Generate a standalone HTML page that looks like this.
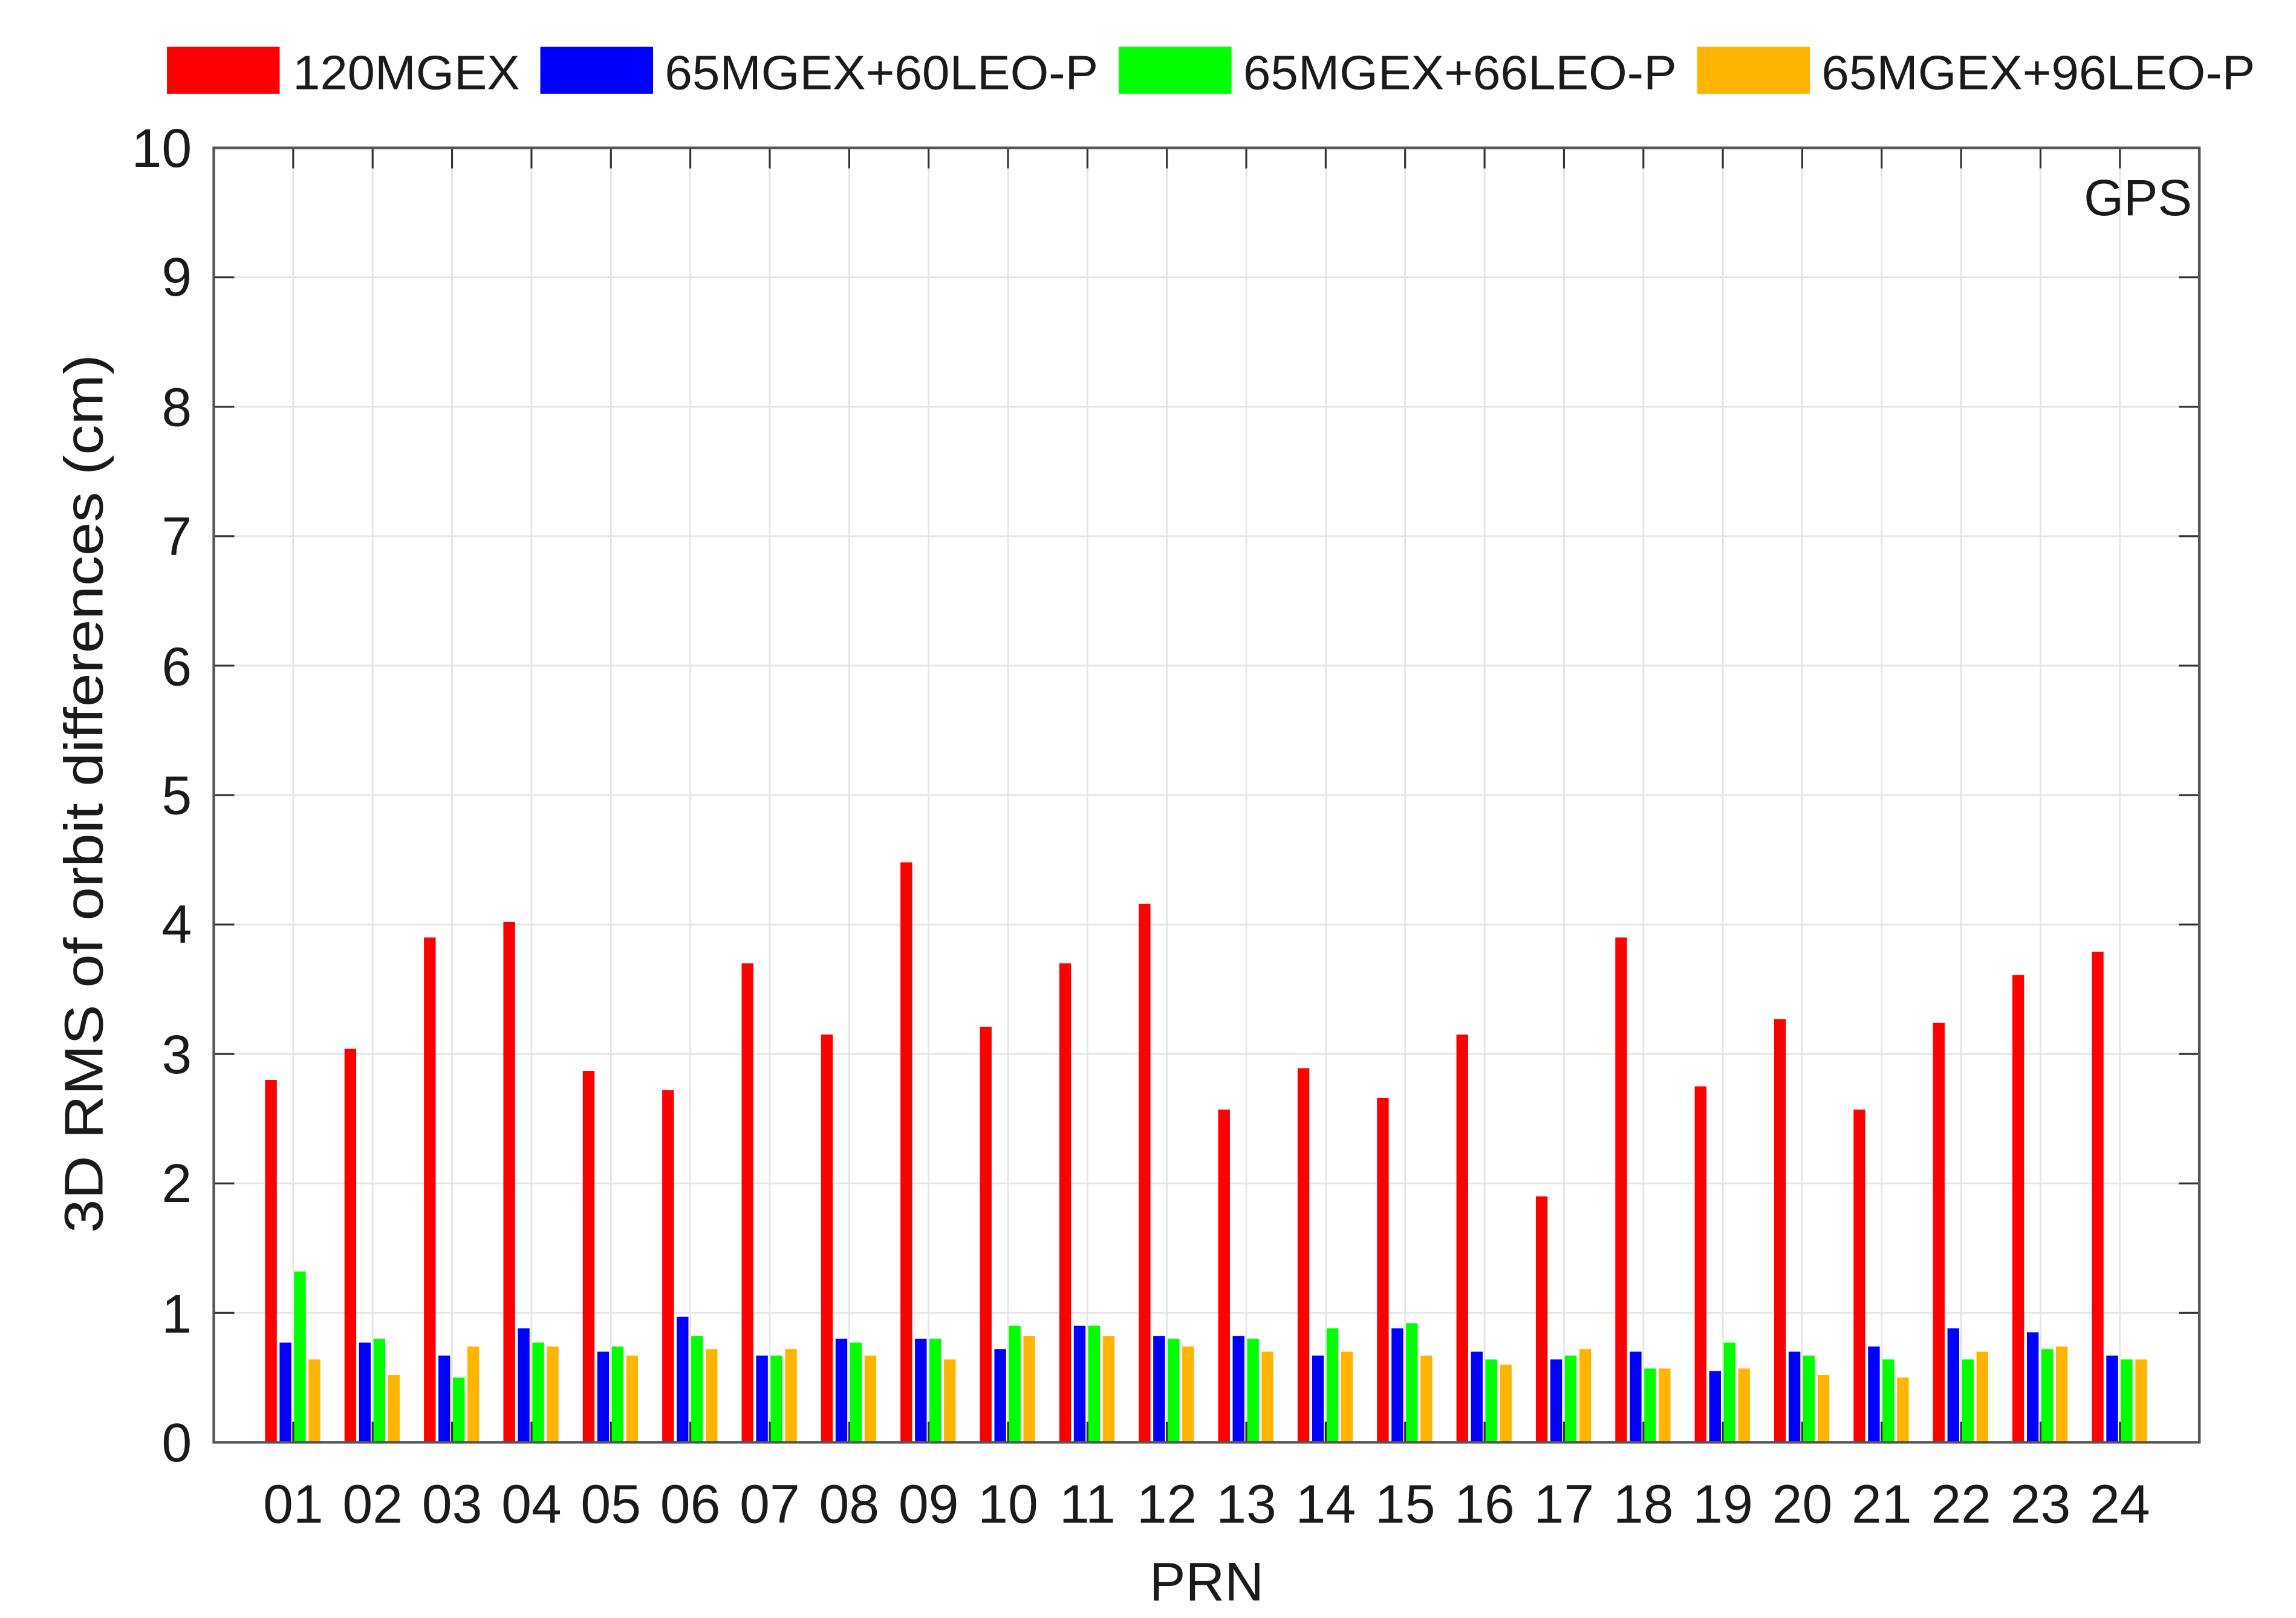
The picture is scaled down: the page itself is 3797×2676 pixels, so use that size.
<!DOCTYPE html>
<html><head><meta charset="utf-8"><style>
html,body{margin:0;padding:0;background:#fff}
svg{display:block}
text{font-family:"Liberation Sans",Arial,sans-serif;fill:#1a1a1a}
.r{fill:#ff0000}.b{fill:#0000ff}.g{fill:#00ff00}.o{fill:#ffb400}
</style></head><body>
<svg width="3797" height="2676" viewBox="0 0 1568 1105" preserveAspectRatio="none" xmlns="http://www.w3.org/2000/svg">
<rect width="1568" height="1105" fill="#fff"/>
<rect x="114" y="32" width="77" height="32" class="r"/>
<text x="200" y="61" font-size="33" textLength="155" lengthAdjust="spacingAndGlyphs">120MGEX</text>
<rect x="369" y="32" width="77" height="32" class="b"/>
<text x="454" y="61" font-size="33" textLength="296" lengthAdjust="spacingAndGlyphs">65MGEX+60LEO-P</text>
<rect x="764" y="32" width="77" height="32" class="g"/>
<text x="849" y="61" font-size="33" textLength="296" lengthAdjust="spacingAndGlyphs">65MGEX+66LEO-P</text>
<rect x="1159" y="32" width="77" height="32" class="o"/>
<text x="1244" y="61" font-size="33" textLength="296" lengthAdjust="spacingAndGlyphs">65MGEX+96LEO-P</text>
<g stroke="#e6e6e6" stroke-width="1.2">
<line x1="146" x2="1502" y1="896.6" y2="896.6"/><line x1="146" x2="1502" y1="808.2" y2="808.2"/>
<line x1="146" x2="1502" y1="719.8" y2="719.8"/><line x1="146" x2="1502" y1="631.4" y2="631.4"/>
<line x1="146" x2="1502" y1="543" y2="543"/><line x1="146" x2="1502" y1="454.6" y2="454.6"/>
<line x1="146" x2="1502" y1="366.2" y2="366.2"/><line x1="146" x2="1502" y1="277.8" y2="277.8"/>
<line x1="146" x2="1502" y1="189.4" y2="189.4"/>
</g>
<g stroke="#e6e6e6" stroke-width="1.2">
<line x1="200.24" x2="200.24" y1="101" y2="985"/><line x1="254.48" x2="254.48" y1="101" y2="985"/>
<line x1="308.72" x2="308.72" y1="101" y2="985"/><line x1="362.96" x2="362.96" y1="101" y2="985"/>
<line x1="417.2" x2="417.2" y1="101" y2="985"/><line x1="471.44" x2="471.44" y1="101" y2="985"/>
<line x1="525.68" x2="525.68" y1="101" y2="985"/><line x1="579.92" x2="579.92" y1="101" y2="985"/>
<line x1="634.16" x2="634.16" y1="101" y2="985"/><line x1="688.4" x2="688.4" y1="101" y2="985"/>
<line x1="742.64" x2="742.64" y1="101" y2="985"/><line x1="796.88" x2="796.88" y1="101" y2="985"/>
<line x1="851.12" x2="851.12" y1="101" y2="985"/><line x1="905.36" x2="905.36" y1="101" y2="985"/>
<line x1="959.6" x2="959.6" y1="101" y2="985"/><line x1="1013.84" x2="1013.84" y1="101" y2="985"/>
<line x1="1068.08" x2="1068.08" y1="101" y2="985"/><line x1="1122.32" x2="1122.32" y1="101" y2="985"/>
<line x1="1176.56" x2="1176.56" y1="101" y2="985"/><line x1="1230.8" x2="1230.8" y1="101" y2="985"/>
<line x1="1285.04" x2="1285.04" y1="101" y2="985"/><line x1="1339.28" x2="1339.28" y1="101" y2="985"/>
<line x1="1393.52" x2="1393.52" y1="101" y2="985"/><line x1="1447.76" x2="1447.76" y1="101" y2="985"/>
</g>
<g transform="translate(200.24,985) scale(1,-88.4)"><rect x="-19.2" width="8" height="2.80" class="r"/><rect x="-9.3" width="8" height="0.77" class="b"/><rect x="0.6" width="8" height="1.32" class="g"/><rect x="10.5" width="8" height="0.64" class="o"/></g>
<g transform="translate(254.48,985) scale(1,-88.4)"><rect x="-19.2" width="8" height="3.04" class="r"/><rect x="-9.3" width="8" height="0.77" class="b"/><rect x="0.6" width="8" height="0.80" class="g"/><rect x="10.5" width="8" height="0.52" class="o"/></g>
<g transform="translate(308.72,985) scale(1,-88.4)"><rect x="-19.2" width="8" height="3.90" class="r"/><rect x="-9.3" width="8" height="0.67" class="b"/><rect x="0.6" width="8" height="0.50" class="g"/><rect x="10.5" width="8" height="0.74" class="o"/></g>
<g transform="translate(362.96,985) scale(1,-88.4)"><rect x="-19.2" width="8" height="4.02" class="r"/><rect x="-9.3" width="8" height="0.88" class="b"/><rect x="0.6" width="8" height="0.77" class="g"/><rect x="10.5" width="8" height="0.74" class="o"/></g>
<g transform="translate(417.2,985) scale(1,-88.4)"><rect x="-19.2" width="8" height="2.87" class="r"/><rect x="-9.3" width="8" height="0.70" class="b"/><rect x="0.6" width="8" height="0.74" class="g"/><rect x="10.5" width="8" height="0.67" class="o"/></g>
<g transform="translate(471.44,985) scale(1,-88.4)"><rect x="-19.2" width="8" height="2.72" class="r"/><rect x="-9.3" width="8" height="0.97" class="b"/><rect x="0.6" width="8" height="0.82" class="g"/><rect x="10.5" width="8" height="0.72" class="o"/></g>
<g transform="translate(525.68,985) scale(1,-88.4)"><rect x="-19.2" width="8" height="3.70" class="r"/><rect x="-9.3" width="8" height="0.67" class="b"/><rect x="0.6" width="8" height="0.67" class="g"/><rect x="10.5" width="8" height="0.72" class="o"/></g>
<g transform="translate(579.92,985) scale(1,-88.4)"><rect x="-19.2" width="8" height="3.15" class="r"/><rect x="-9.3" width="8" height="0.80" class="b"/><rect x="0.6" width="8" height="0.77" class="g"/><rect x="10.5" width="8" height="0.67" class="o"/></g>
<g transform="translate(634.16,985) scale(1,-88.4)"><rect x="-19.2" width="8" height="4.48" class="r"/><rect x="-9.3" width="8" height="0.80" class="b"/><rect x="0.6" width="8" height="0.80" class="g"/><rect x="10.5" width="8" height="0.64" class="o"/></g>
<g transform="translate(688.4,985) scale(1,-88.4)"><rect x="-19.2" width="8" height="3.21" class="r"/><rect x="-9.3" width="8" height="0.72" class="b"/><rect x="0.6" width="8" height="0.90" class="g"/><rect x="10.5" width="8" height="0.82" class="o"/></g>
<g transform="translate(742.64,985) scale(1,-88.4)"><rect x="-19.2" width="8" height="3.70" class="r"/><rect x="-9.3" width="8" height="0.90" class="b"/><rect x="0.6" width="8" height="0.90" class="g"/><rect x="10.5" width="8" height="0.82" class="o"/></g>
<g transform="translate(796.88,985) scale(1,-88.4)"><rect x="-19.2" width="8" height="4.16" class="r"/><rect x="-9.3" width="8" height="0.82" class="b"/><rect x="0.6" width="8" height="0.80" class="g"/><rect x="10.5" width="8" height="0.74" class="o"/></g>
<g transform="translate(851.12,985) scale(1,-88.4)"><rect x="-19.2" width="8" height="2.57" class="r"/><rect x="-9.3" width="8" height="0.82" class="b"/><rect x="0.6" width="8" height="0.80" class="g"/><rect x="10.5" width="8" height="0.70" class="o"/></g>
<g transform="translate(905.36,985) scale(1,-88.4)"><rect x="-19.2" width="8" height="2.89" class="r"/><rect x="-9.3" width="8" height="0.67" class="b"/><rect x="0.6" width="8" height="0.88" class="g"/><rect x="10.5" width="8" height="0.70" class="o"/></g>
<g transform="translate(959.6,985) scale(1,-88.4)"><rect x="-19.2" width="8" height="2.66" class="r"/><rect x="-9.3" width="8" height="0.88" class="b"/><rect x="0.6" width="8" height="0.92" class="g"/><rect x="10.5" width="8" height="0.67" class="o"/></g>
<g transform="translate(1013.84,985) scale(1,-88.4)"><rect x="-19.2" width="8" height="3.15" class="r"/><rect x="-9.3" width="8" height="0.70" class="b"/><rect x="0.6" width="8" height="0.64" class="g"/><rect x="10.5" width="8" height="0.60" class="o"/></g>
<g transform="translate(1068.08,985) scale(1,-88.4)"><rect x="-19.2" width="8" height="1.90" class="r"/><rect x="-9.3" width="8" height="0.64" class="b"/><rect x="0.6" width="8" height="0.67" class="g"/><rect x="10.5" width="8" height="0.72" class="o"/></g>
<g transform="translate(1122.32,985) scale(1,-88.4)"><rect x="-19.2" width="8" height="3.90" class="r"/><rect x="-9.3" width="8" height="0.70" class="b"/><rect x="0.6" width="8" height="0.57" class="g"/><rect x="10.5" width="8" height="0.57" class="o"/></g>
<g transform="translate(1176.56,985) scale(1,-88.4)"><rect x="-19.2" width="8" height="2.75" class="r"/><rect x="-9.3" width="8" height="0.55" class="b"/><rect x="0.6" width="8" height="0.77" class="g"/><rect x="10.5" width="8" height="0.57" class="o"/></g>
<g transform="translate(1230.8,985) scale(1,-88.4)"><rect x="-19.2" width="8" height="3.27" class="r"/><rect x="-9.3" width="8" height="0.70" class="b"/><rect x="0.6" width="8" height="0.67" class="g"/><rect x="10.5" width="8" height="0.52" class="o"/></g>
<g transform="translate(1285.04,985) scale(1,-88.4)"><rect x="-19.2" width="8" height="2.57" class="r"/><rect x="-9.3" width="8" height="0.74" class="b"/><rect x="0.6" width="8" height="0.64" class="g"/><rect x="10.5" width="8" height="0.50" class="o"/></g>
<g transform="translate(1339.28,985) scale(1,-88.4)"><rect x="-19.2" width="8" height="3.24" class="r"/><rect x="-9.3" width="8" height="0.88" class="b"/><rect x="0.6" width="8" height="0.64" class="g"/><rect x="10.5" width="8" height="0.70" class="o"/></g>
<g transform="translate(1393.52,985) scale(1,-88.4)"><rect x="-19.2" width="8" height="3.61" class="r"/><rect x="-9.3" width="8" height="0.85" class="b"/><rect x="0.6" width="8" height="0.72" class="g"/><rect x="10.5" width="8" height="0.74" class="o"/></g>
<g transform="translate(1447.76,985) scale(1,-88.4)"><rect x="-19.2" width="8" height="3.79" class="r"/><rect x="-9.3" width="8" height="0.67" class="b"/><rect x="0.6" width="8" height="0.64" class="g"/><rect x="10.5" width="8" height="0.64" class="o"/></g>
<g stroke="#333" stroke-width="1.3">
<path d="M200.24 101v14M254.48 101v14M308.72 101v14M362.96 101v14M417.2 101v14M471.44 101v14M525.68 101v14M579.92 101v14M634.16 101v14M688.4 101v14M742.64 101v14M796.88 101v14M851.12 101v14M905.36 101v14M959.6 101v14M1013.84 101v14M1068.08 101v14M1122.32 101v14M1176.56 101v14M1230.8 101v14M1285.04 101v14M1339.28 101v14M1393.52 101v14M1447.76 101v14"/>
<path d="M200.24 985v-14M254.48 985v-14M308.72 985v-14M362.96 985v-14M417.2 985v-14M471.44 985v-14M525.68 985v-14M579.92 985v-14M634.16 985v-14M688.4 985v-14M742.64 985v-14M796.88 985v-14M851.12 985v-14M905.36 985v-14M959.6 985v-14M1013.84 985v-14M1068.08 985v-14M1122.32 985v-14M1176.56 985v-14M1230.8 985v-14M1285.04 985v-14M1339.28 985v-14M1393.52 985v-14M1447.76 985v-14"/>
<path d="M146 896.6h14M146 808.2h14M146 719.8h14M146 631.4h14M146 543h14M146 454.6h14M146 366.2h14M146 277.8h14M146 189.4h14"/>
<path d="M1502 896.6h-14M1502 808.2h-14M1502 719.8h-14M1502 631.4h-14M1502 543h-14M1502 454.6h-14M1502 366.2h-14M1502 277.8h-14M1502 189.4h-14"/>
</g>
<rect x="146" y="101" width="1356" height="884" fill="none" stroke="#555" stroke-width="1.8"/>
<g font-size="37" text-anchor="end">
<text x="131" y="998">0</text><text x="131" y="910">1</text><text x="131" y="821">2</text>
<text x="131" y="733">3</text><text x="131" y="644">4</text><text x="131" y="556">5</text>
<text x="131" y="468">6</text><text x="131" y="379">7</text><text x="131" y="291">8</text>
<text x="131" y="202">9</text><text x="131" y="114">10</text>
</g>
<g font-size="37" text-anchor="middle">
<text x="200.24" y="1040">01</text><text x="254.48" y="1040">02</text><text x="308.72" y="1040">03</text>
<text x="362.96" y="1040">04</text><text x="417.2" y="1040">05</text><text x="471.44" y="1040">06</text>
<text x="525.68" y="1040">07</text><text x="579.92" y="1040">08</text><text x="634.16" y="1040">09</text>
<text x="688.4" y="1040">10</text><text x="742.64" y="1040">11</text><text x="796.88" y="1040">12</text>
<text x="851.12" y="1040">13</text><text x="905.36" y="1040">14</text><text x="959.6" y="1040">15</text>
<text x="1013.84" y="1040">16</text><text x="1068.08" y="1040">17</text><text x="1122.32" y="1040">18</text>
<text x="1176.56" y="1040">19</text><text x="1230.8" y="1040">20</text><text x="1285.04" y="1040">21</text>
<text x="1339.28" y="1040">22</text><text x="1393.52" y="1040">23</text><text x="1447.76" y="1040">24</text>
</g>
<text x="824" y="1093" font-size="37" text-anchor="middle">PRN</text>
<text x="1497" y="147" font-size="35" text-anchor="end">GPS</text>
<text transform="translate(70,542) rotate(-90)" font-size="37" text-anchor="middle" textLength="600" lengthAdjust="spacingAndGlyphs">3D RMS of orbit differences (cm)</text>
</svg>
</body></html>
